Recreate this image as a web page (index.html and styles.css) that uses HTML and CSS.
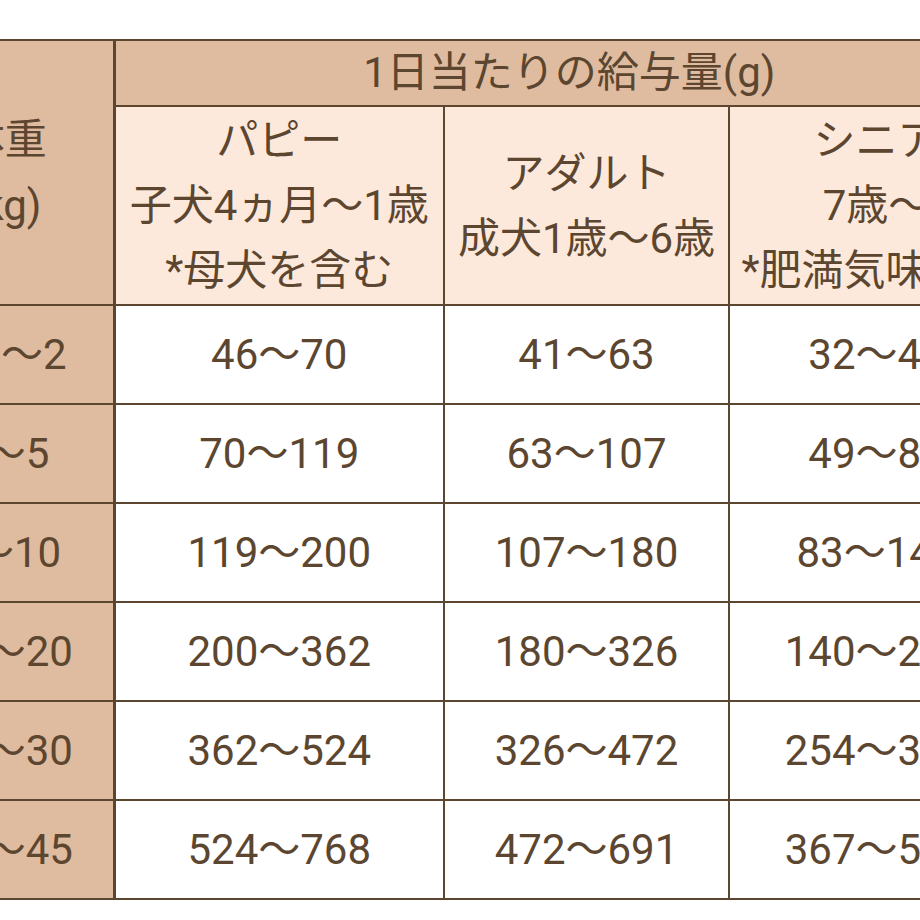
FILE: index.html
```html
<!DOCTYPE html>
<html lang="ja">
<head>
<meta charset="utf-8">
<link rel="stylesheet" href="styles.css">
</head>
<body>
<div class="frame">
<table class="feed">
  <colgroup>
    <col class="c-weight">
    <col class="c-puppy">
    <col class="c-adult">
    <col class="c-senior">
  </colgroup>
  <thead>
    <tr class="h1">
      <th class="weight" rowspan="2">体重<br>(kg)</th>
      <th class="span" colspan="3">1日当たりの給与量(g)</th>
    </tr>
    <tr class="h2">
      <th class="sub">パピー<br>子犬4ヵ月～1歳<br>*母犬を含む</th>
      <th class="sub">アダルト<br>成犬1歳～6歳</th>
      <th class="sub">シニア<br>7歳～<br>*肥満気味の犬</th>
    </tr>
  </thead>
  <tbody>
    <tr><th class="weight">0.5～2</th><td>46～70</td><td>41～63</td><td>32～49</td></tr>
    <tr><th class="weight">2～5</th><td>70～119</td><td>63～107</td><td>49～83</td></tr>
    <tr><th class="weight">5～10</th><td>119～200</td><td>107～180</td><td>83～140</td></tr>
    <tr><th class="weight">10～20</th><td>200～362</td><td>180～326</td><td>140～254</td></tr>
    <tr><th class="weight">20～30</th><td>362～524</td><td>326～472</td><td>254～367</td></tr>
    <tr><th class="weight">30～45</th><td>524～768</td><td>472～691</td><td>367～538</td></tr>
  </tbody>
</table>
</div>
</body>
</html>
```
FILE: styles.css
```css
html, body {
  margin: 0;
  padding: 0;
  background: #ffffff;
}
.frame {
  width: 920px;
  height: 920px;
  overflow: hidden;
  padding-top: 39px;
  box-sizing: border-box;
}
.feed {
  margin-left: -105px;
  border-collapse: collapse;
  table-layout: fixed;
  width: 1128px;
  font-family: Roboto, "Noto Sans CJK JP", sans-serif;
  font-size: 42px;
  font-weight: 400;
  color: #5c4630;
}
.c-weight { width: 218px; }
.c-puppy { width: 330px; }
.c-adult { width: 285px; }
.c-senior { width: 295px; }
.feed th, .feed td {
  border: 2px solid #5c4630;
  padding: 0;
  text-align: center;
  vertical-align: middle;
  font-weight: 400;
  line-height: 66px;
}
.feed th.weight {
  background: #dfbca0;
  border-right-width: 3px;
}
.h1 .span {
  background: #dfbca0;
  height: 64px;
  line-height: 60px;
}
.h2 .sub {
  background: #fde9db;
  height: 197px;
  line-height: 65px;
}
.feed tbody tr {
  height: 99px;
}
.feed td {
  background: #ffffff;
}
```
